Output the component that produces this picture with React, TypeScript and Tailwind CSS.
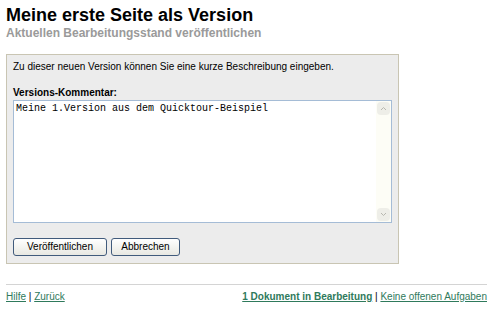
export default function App() {
  return (
    <div className="min-h-screen bg-white px-[6px] pt-[5px] text-black" style={{ fontFamily: '"Liberation Sans", Arial, sans-serif' }}>
      <h1 className="text-[18px] font-bold leading-[21px]">Meine erste Seite als Version</h1>
      <h2 className="text-[12px] font-bold leading-[14px] text-[#9a9a9a]">Aktuellen Bearbeitungsstand veröffentlichen</h2>

      <div className="mt-[14px] w-[393px] border border-[#c9c5b3] bg-[#ececec] px-[6px] pt-[6px] pb-[7px] text-[10px]">
        <p className="leading-[12px]">Zu dieser neuen Version können Sie eine kurze Beschreibung eingeben.</p>
        <label className="mt-[14px] mb-[1px] block font-bold leading-[12px]">Versions-Kommentar:</label>
        <div className="flex h-[123px] w-[379px] border border-[#a5bcd6] bg-white">
          <div className="flex-1 px-[2px] pt-[2px] text-[10px] leading-[12px]" style={{ fontFamily: '"Liberation Mono", "Courier New", monospace' }}>
            Meine 1.Version aus dem Quicktour-Beispiel
          </div>
          <div className="flex w-[15px] flex-col justify-between bg-[#fdfdf6] p-[1px]">
            <div className="flex h-[13px] items-center justify-center rounded-sm bg-[#eeeee8]">
              <svg width="7" height="5" viewBox="0 0 7 5"><path d="M1 4 L3.5 1.5 L6 4" fill="none" stroke="#b8b8b0" strokeWidth="1" /></svg>
            </div>
            <div className="flex h-[13px] items-center justify-center rounded-sm bg-[#eeeee8]">
              <svg width="7" height="5" viewBox="0 0 7 5"><path d="M1 1 L3.5 3.5 L6 1" fill="none" stroke="#b8b8b0" strokeWidth="1" /></svg>
            </div>
          </div>
        </div>
        <div className="mt-[15px] flex gap-[4px]">
          <button className="h-[18px] w-[94px] rounded-[3px] border border-[#415b7c] bg-gradient-to-b from-white to-[#e8e8e2] text-[10px] leading-[16px]">Veröffentlichen</button>
          <button className="h-[18px] w-[69px] rounded-[3px] border border-[#415b7c] bg-gradient-to-b from-white to-[#e8e8e2] text-[10px] leading-[16px]">Abbrechen</button>
        </div>
      </div>

      <div className="mt-[20px] w-[481px] border-t border-[#d4d4d4] pt-[6px]">
        <div className="flex justify-between text-[10px] leading-[12px]">
          <div>
            <a className="text-[#2f7a5c] underline">Hilfe</a> | <a className="text-[#2f7a5c] underline">Zurück</a>
          </div>
          <div>
            <a className="font-bold text-[#2f7a5c] underline">1 Dokument in Bearbeitung</a> | <a className="text-[#2f7a5c] underline">Keine offenen Aufgaben</a>
          </div>
        </div>
      </div>
    </div>
  );
}
